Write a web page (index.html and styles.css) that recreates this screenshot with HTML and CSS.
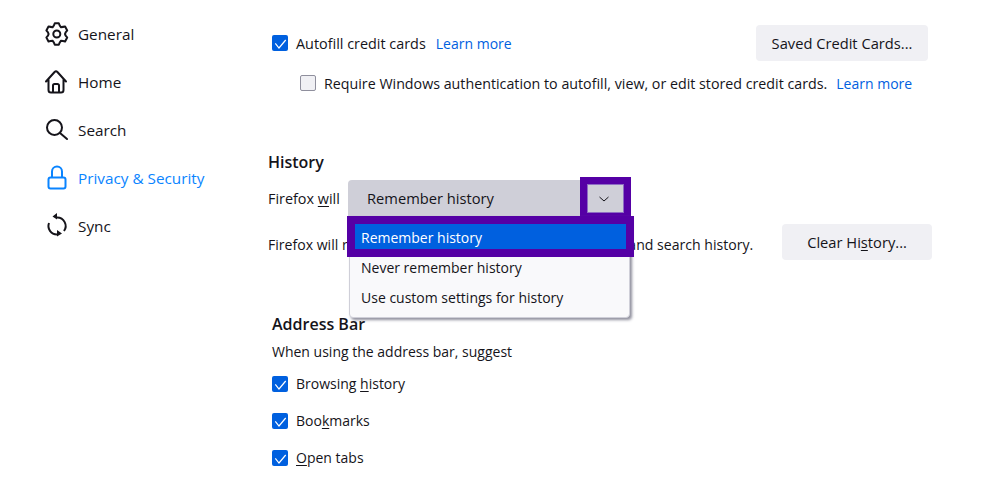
FILE: index.html
```html
<!DOCTYPE html>
<html lang="en">
<head>
<meta charset="utf-8">
<title>Firefox Settings</title>
<link rel="stylesheet" href="styles.css">
</head>
<body>
<div class="app">
  <nav class="nav">
    <a class="nav-item"><svg class="nav-icon" viewBox="0 0 24 24"><path d="M9.800 1.200H13.800Q14.600 3.800 16 5.300 18 5 20.100 4.600L22.200 8.400Q20.300 10 20 12 20.300 14 22.200 15.600L20.100 19.400Q18 19 16 18.700 14.600 20.200 13.800 22.800H9.800Q9 20.200 7.600 18.700 5.600 19 3.500 19.400L1.400 15.600Q3.300 14 3.600 12 3.300 10 1.400 8.400L3.500 4.600Q5.600 5 7.600 5.300 9 3.800 9.800 1.200Z" stroke-linejoin="round"/><circle cx="11.800" cy="12" r="3.500"/></svg><span>General</span></a>
    <a class="nav-item"><svg class="nav-icon" viewBox="0 0 24 24"><path d="M1 11.500 9.600 2a2 2 0 0 1 2.800 0L21 11.500M3.500 9.500V20A2.500 2.500 0 0 0 6 22.500H16A2.500 2.500 0 0 0 18.500 20V9.500M8 22.500V15.500A1.500 1.500 0 0 1 9.500 14H12.500A1.500 1.500 0 0 1 14 15.500V22.500" stroke-linejoin="round" stroke-linecap="round"/></svg><span>Home</span></a>
    <a class="nav-item"><svg class="nav-icon" viewBox="0 0 24 24"><circle cx="9.500" cy="9.500" r="7.500"/><path d="m15 15 7 6" stroke-linecap="round"/></svg><span>Search</span></a>
    <a class="nav-item nav-active"><svg class="nav-icon" viewBox="0 0 24 24"><rect x="3.500" y="11.500" width="17" height="11" rx="2"/><path d="M7 11.500V5.500a5 5 0 0 1 10 0v6"/></svg><span>Privacy &amp; Security</span></a>
    <a class="nav-item"><svg class="nav-icon" viewBox="0 0 24 24"><path d="M12 3.500A8.500 8.500 0 0 1 19 17M12 20.500A8.500 8.500 0 0 1 4 9"/><path class="solid" d="M12-1V5.500L7.500 2.500ZM12 16V22.500L17 19.500Z"/></svg><span>Sync</span></a>
  </nav>
  <main class="main">
    <div class="row row-autofill">
      <label class="check check-wide"><span class="box on"><svg viewBox="0 0 16 16"><path d="m3.300 8.300 3.700 4.700 6.700-8"/></svg></span>Autofill credit cards</label>
      <a class="link link-gap">Learn more</a>
      <button class="btn btn-cards">Saved Credit Cards...</button>
    </div>
    <div class="row row-windows">
      <label class="check check-mid"><span class="box"></span>Require Windows authentication to autofill, view, or edit stored credit cards.</label>
      <a class="link link-gap-small">Learn more</a>
    </div>
    <h2 class="heading heading-history">History</h2>
    <div class="row row-will">
      <span class="will-label">Firefox <u>w</u>ill</span>
      <div class="select">
        <span class="select-value">Remember history</span>
        <span class="select-arrow"><span class="select-arrow-inner"><svg viewBox="0 0 12 12"><path d="m1.500 4 4.500 4 4.500-4"/></svg></span></span>
        <div class="popup">
          <div class="option option-on">Remember history</div>
          <div class="option">Never remember history</div>
          <div class="option">Use custom settings for history</div>
        </div>
      </div>
    </div>
    <div class="row row-desc">
      <span class="desc">Firefox will remember your browsing, download, form, and search history.</span>
      <button class="btn btn-clear">Clear Hi<u>s</u>tory...</button>
    </div>
    <section class="address">
      <h2 class="heading">Address Bar</h2>
      <p class="suggest">When using the address bar, suggest</p>
      <label class="check check-item"><span class="box on"><svg viewBox="0 0 16 16"><path d="m3.300 8.300 3.700 4.700 6.700-8"/></svg></span><span>Browsing <u>h</u>istory</span></label>
      <label class="check check-item"><span class="box on"><svg viewBox="0 0 16 16"><path d="m3.300 8.300 3.700 4.700 6.700-8"/></svg></span><span>Boo<u>k</u>marks</span></label>
      <label class="check check-item"><span class="box on"><svg viewBox="0 0 16 16"><path d="m3.300 8.300 3.700 4.700 6.700-8"/></svg></span><span><u>O</u>pen tabs</span></label>
    </section>
  </main>
</div>
</body>
</html>
```
FILE: styles.css
```css
* { box-sizing: border-box; }
html, body { margin: 0; height: 478px; overflow: hidden; background: #fff; }
body { font-family: "Open Sans", "Noto Sans", sans-serif; font-size: 14px; color: #15141a; }
u { text-underline-offset: 2px; }
.app { display: flex; height: 478px; }

.nav { width: 268px; flex: none; padding: 10px 0 0 45px; display: flex; flex-direction: column; }
.nav-item { display: flex; align-items: center; gap: 9px; height: 48px; font-size: 15.3px; color: #15141a; }
.nav-icon { width: 24px; height: 24px; fill: none; stroke: currentColor; stroke-width: 2; flex: none; overflow: visible; }
.nav-icon .solid { fill: currentColor; stroke: none; }
.nav-active { color: #0a84ff; }

.main { flex: 1; min-width: 0; display: flex; flex-direction: column; }
.row { display: flex; align-items: center; }
.row-autofill { height: 36px; margin: 25px 0 0 4px; }
.row-windows { margin: 4px 0 0 32px; height: 36px; }
.check { display: flex; align-items: center; gap: 8px; }
.check-wide { font-size: 14.4px; }
.check-mid { font-size: 14.25px; }
.box { width: 16px; height: 16px; border-radius: 2px; background: #f0f0f4; border: 1px solid #8f8f9d; flex: none; display: flex; }
.box.on { background: #0060df; border: 0; }
.box svg { width: 100%; height: 100%; fill: none; stroke: #fff; stroke-width: 1.200; }
.link { color: #0060df; }
.link-gap { margin-left: 10px; }
.link-gap-small { margin-left: 9px; }
.btn { height: 36px; border: 0; border-radius: 4px; background: #f0f0f4; color: #15141a; font: inherit; font-size: 14.7px; padding: 0; }
.btn-cards { width: 172px; margin-left: auto; margin-right: 75px; }
.btn-clear { width: 150px; margin-left: 29px; }

.heading { font-size: 16px; font-weight: 600; margin: 0; line-height: 22px; }
.heading-history { margin-top: 50px; }
.row-will { margin-top: 7px; height: 36px; }
.will-label { width: 80px; flex: none; font-size: 14.4px; }
.select { position: relative; width: 283px; height: 36px; background: #cfcfd8; border-radius: 4px 4px 0 0; display: flex; align-items: center; font-size: 14.7px; }
.select-value { padding-left: 19px; }
.select-arrow { position: absolute; right: 0; top: -3px; width: 51px; height: 39px; border: solid #5500a5; border-width: 7px 7px 3px; display: flex; }
.select-arrow-inner { flex: 1; background: #cfcfd8; border: 1px solid #8e6cc4; display: flex; align-items: center; justify-content: center; padding-right: 3px; }
.select-arrow-inner svg { width: 12px; height: 12px; fill: none; stroke: #15141a; stroke-width: 1; }
.popup { position: absolute; left: 1px; top: 36px; width: 281px; height: 102px; background: #f9f9fb; border: 1px solid #cfcfd8; border-radius: 0 0 4px 4px; box-shadow: 2px 2px 3px #8f8f9d; padding-top: 37px; }
.option { height: 30px; padding-left: 11px; line-height: 28px; font-size: 14px; }
.option-on { position: absolute; left: -3px; top: -1px; width: 287px; height: 41px; border: 8px solid #5500a5; background: #0060df; color: #fff; line-height: 28px; padding-left: 6px; }
.row-desc { height: 36px; margin-top: 8px; }
.desc { white-space: nowrap; width: 485px; flex: none; padding-top: 4px; font-size: 14.08px; }
.address { margin: 53px 0 0 4px; }
.suggest { margin: 7px 0 0; line-height: 20px; }
.check-item { height: 37px; }
.suggest + .check-item { margin-top: 3px; }
```
